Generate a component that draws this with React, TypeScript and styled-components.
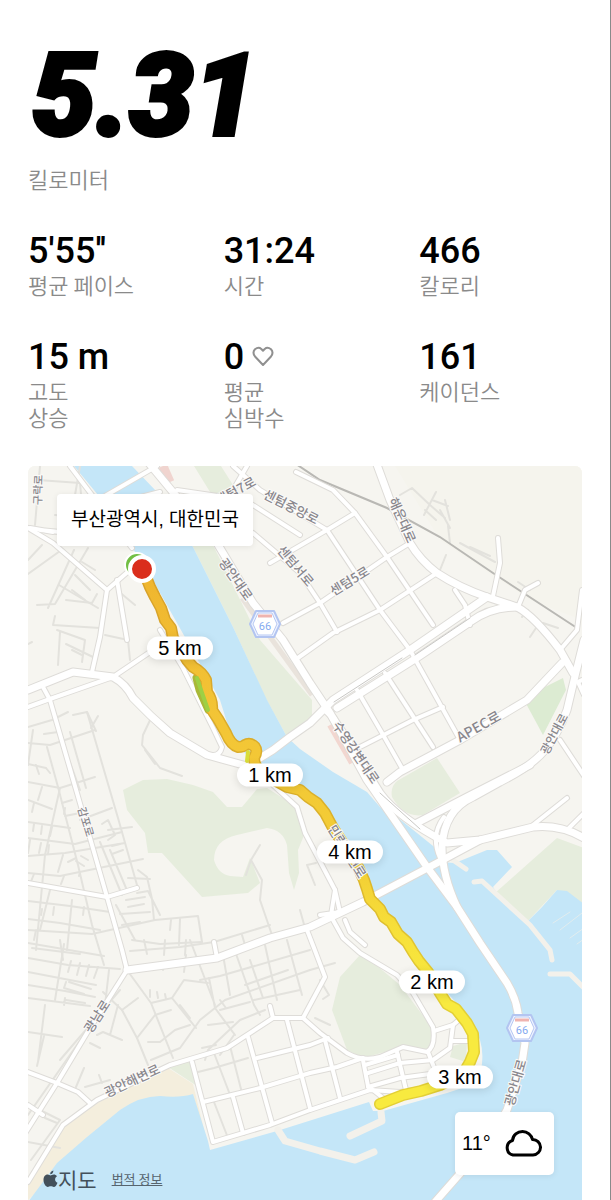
import React from "react";
import styled, { createGlobalStyle } from "styled-components";

const GlobalStyle = createGlobalStyle`
  * { box-sizing: border-box; }
  body { margin: 0; background: #fff; color: #000; font-family: "Liberation Sans", "Noto Sans CJK KR", sans-serif; }
`;

const Page = styled.main`
  padding: 44px 28px 0;
  border-right: 1px solid #8a8a8a;
`;

const Distance = styled.h1`
  margin: 0;
  padding-left: 4px;
  font-family: Roboto, "Liberation Sans", sans-serif;
  font-size: 114px;
  line-height: 104px;
  font-weight: 900;
  font-style: italic;
  -webkit-text-stroke: 4px #000;
`;

const Label = styled.span`
  display: block;
  font-family: "Noto Sans CJK KR", sans-serif;
  font-size: 22px;
  font-weight: 350;
  line-height: 26px;
  color: #8a8a8a;
  white-space: pre-line;
`;

const DistanceLabel = styled(Label)`
  margin-top: 17px;
`;

const Stats = styled.dl`
  display: grid;
  grid-template-columns: repeat(3, 1fr);
  column-gap: 33px;
  row-gap: 40px;
  margin: 40px 0 37px;
`;

const Stat = styled.div`
  display: flex;
  flex-direction: column-reverse;
  justify-content: flex-end;
`;

const Value = styled.dd`
  display: flex;
  align-items: center;
  gap: 8px;
  margin: 0;
  font-family: Roboto, "Liberation Sans", sans-serif;
  font-size: 36px;
  font-weight: 500;
  line-height: 40px;
  white-space: pre;
`;

const MapPanel = styled.section`
  position: relative;
  aspect-ratio: 554 / 734;
  overflow: hidden;
  border-radius: 7px 7px 0 0;
  background: #f6f5f0;
`;

const MapDrawing = styled.svg`
  display: block;
  width: 100%;
  height: 100%;
`;

const Place = styled.div`
  position: absolute;
  top: 28px;
  left: 29px;
  padding: 0 14px;
  border-radius: 4px;
  background: #fff;
  box-shadow: 0 1px 6px rgba(0, 0, 0, 0.08);
  font-size: 19px;
  line-height: 52px;
`;

const KmPill = styled.span<{ $x: number; $y: number }>`
  position: absolute;
  left: ${(p) => ((p.$x - 28) / 554) * 100}%;
  top: ${(p) => ((p.$y - 466) / 734) * 100}%;
  transform: translate(-50%, -50%);
  width: 66px;
  border-radius: 12px;
  background: #fff;
  box-shadow: 0 2px 8px rgba(0, 0, 0, 0.12);
  font-size: 20px;
  line-height: 23px;
  text-align: center;
`;

const Weather = styled.div`
  position: absolute;
  right: 28px;
  bottom: 25px;
  display: flex;
  align-items: center;
  justify-content: space-between;
  width: 99px;
  height: 63px;
  padding: 0 12px 0 7px;
  border-radius: 5px;
  background: #fff;
  box-shadow: 0 1px 6px rgba(0, 0, 0, 0.08);
  font-size: 20px;
`;

const Attribution = styled.footer`
  position: absolute;
  left: 15px;
  bottom: 7px;
  display: flex;
  align-items: center;
  color: #43505a;
  font-family: "Noto Sans CJK KR", sans-serif;
  font-size: 21px;
  line-height: 28px;
`;

const Legal = styled.a`
  margin-left: 15px;
  font-size: 13px;
  color: #56646e;
  text-decoration: underline;
`;

const RoadName = styled.text`
  font-family: "Noto Sans CJK KR", sans-serif;
  font-weight: 500;
  fill: #89878d;
  stroke: #fbfaf8;
  stroke-width: 2px;
  paint-order: stroke;
  text-anchor: middle;
`;

const stats = [
  { value: "5'55''", label: "평균 페이스" },
  { value: "31:24", label: "시간" },
  { value: "466", label: "칼로리" },
  { value: "15 m", label: "고도\n상승" },
  { value: "0", label: "평균\n심박수", heart: true },
  { value: "161", label: "케이던스" },
];

const markers = [
  { text: "5 km", x: 180, y: 648 },
  { text: "1 km", x: 270, y: 775 },
  { text: "4 km", x: 350, y: 852 },
  { text: "2 km", x: 432, y: 982 },
  { text: "3 km", x: 460, y: 1077 },
];

const names: [string, number, number, number, number][] = [
  ["센텀7로", 238, 495, -29, 13],
  ["센텀중앙로", 289, 511, 27, 13],
  ["센텀서로", 292, 569, 50, 13],
  ["센텀5로", 352, 585, -31, 13],
  ["해운대로", 398, 522, 66, 13],
  ["광안대로", 232, 582, 55, 13],
  ["수영강변대로", 352, 755, 56, 13],
  ["APEC로", 481, 731, -29, 14],
  ["광안대로", 558, 736, -62, 12],
  ["감포로", 82, 823, 73, 11],
  ["광남로", 101, 1019, -57, 13],
  ["광안해변로", 134, 1085, -25, 13],
  ["광안대로", 520, 1084, -74, 13],
  ["민락수변로", 343, 854, 58, 13],
  ["구락로", 42, 490, -88, 11],
];

const railway = "M296 464L320 480L387 508L440 537L493 573L577 628";

const avenues = [
  "M148 462L177 497L217 543L253 603L283 640L310 683L330 713L367 780L427 867L457 907L480 943L507 983Q516 998 518 1013L525 1043L522 1063L507 1110L490 1140L457 1177L435 1202",
  "M376 462L390 500L410 543Q420 560 437 573Q460 588 487 597L517 607Q534 616 560 650L573 673",
  "M28 690L73 672L113 677Q126 684 133 698Q150 716 170 733L207 755L247 766L273 750L290 737L310 723L333 700L410 650L487 597",
  "M337 708L415 659L470 622Q490 607 517 607",
  "M584 640L576 672L567 710Q558 734 545 750Q532 766 500 782L473 797Q444 810 442 847Q442 875 457 907",
  "M333 718L380 793Q397 817 447 843L480 840L533 827Q560 824 584 838",
  "M387 782L400 772L460 740L527 700L562 663",
  "M417 823L467 797L530 765",
  "M127 970L217 958L270 938L310 927L363 902L437 863L480 840",
];

const streets = [
  "M28 528L53 543L107 590L138 563", "M53 532L30 528M40 530L60 532",
  "M107 590L100 637L92 672", "M117 580L127 640", "M28 707L50 699L113 677L153 650",
  "M43 687L50 700L77 793L107 897L122 950L127 970L87 1033L57 1083L26 1132",
  "M28 883L107 897L137 888", "M132 548L70 466",
  "M212 755Q220 756 222 747L213 728L183 668L160 630",
  "M273 785L297 807L305 833L323 867L335 890L340 912",
  "M28 1182L63 1125L97 1100L170 1065L227 1048L273 1018L303 1018L320 1033L347 1053Q363 1062 380 1057L403 1047L427 1052Q436 1046 433 1027L413 993L397 975L360 953L343 938L333 920",
  "M28 1072L57 1083L78 1092L90 1103", "M28 1105L43 1115",
  "M303 1018L325 977L314 948L307 930",
  "M217 958L214 942", "M273 1018L270 1006",
  "M192 1062L213 1142L270 1125L310 1110L370 1090L400 1092L447 1085",
  "M203 1102L260 1088L310 1073L337 1067L363 1058",
  "M257 1058L310 1045L328 1038", "M248 1037L272 1123", "M287 1020L310 1108",
  "M233 1097L243 1133", "M325 1040L340 1098", "M363 1060L368 1086L383 1098",
  "M397 1052L406 1090", "M428 1052L437 1075", "M368 1073L400 1063L433 1060L450 1048L453 1025L434 1031",
  "M368 1087L400 1078L430 1074", "M453 1025L460 1019M453 1041L468 1041M365 1065L398 1055",
  "M335 890L331 915M320 915L340 912",
  "M160 492L98 508M98 500L157 466",
  "M498 538L500 563L493 596", "M518 607L525 590L538 583",
  "M296 472L333 490L355 513L387 557L433 625",
  "M233 466L260 490L327 530", "M177 490L245 500L300 535",
  "M270 563L327 530L355 513", "M327 530L380 610L410 650L460 740",
  "M283 623L320 603L387 557L410 543", "M295 660L333 633L380 610L437 573",
  "M253 533L300 573L320 603L337 632", "M247 466L233 490",
  "M357 690L382 733L403 770", "M385 673L433 747", "M360 747L413 720L443 707",
  "M470 625L465 605L455 590", "M533 825L567 798", "M567 830L584 813",
  "M560 740L584 776", "M582 590L577 630L560 650", "M584 695L578 682L582 680",
  "M326 712Q345 730 350 742M440 858Q430 835 444 817",
  "M345 920L350 932L365 945",
];

const lanes = [
  "M38 480L80 483L83 516M80 466L75 495M55 515L90 518M40 466L35 525",
  "M28 560L42 545M28 574L60 551M48 608L74 550M37 605L55 604L88 548M66 600L92 603L97 594",
  "M59 585L98 608M53 625L100 628M55 616L53 625M60 632L58 665M57 630L85 640L82 662M66 644L95 658M72 650L82 655M90 590L75 575",
  "M105 635L128 640L130 660M72 590L85 600M95 570L82 562M28 644L32 642M117 590L135 605",
  "M28 727L52 720L68 712M28 743L50 745L95 730M33 730L28 765M44 734L58 732M73 715L87 712L101 760L118 818L137 885",
  "M87 712L96 731M98 716L91 728M47 747L58 787L78 865L92 925L104 965M60 735L80 790M70 732L86 788",
  "M28 764L46 768M36 765L39 774M46 768L50 773M28 782L60 788L95 777M42 787L38 800M28 800L52 809M34 803L32 812",
  "M60 788L45 855L36 950M62 803L72 800M65 808L64 814M65 816L80 813M80 820L112 808M28 822L70 828",
  "M34 824L33 831M42 826L41 834M52 827L50 836M102 824L108 820L115 835L108 840M108 830L132 827",
  "M28 838L75 844L122 832M30 840L28 853M41 843L39 853M49 845L48 854M28 856L65 853L125 843M63 855L58 872",
  "M100 842L122 895M110 850L126 888M112 846L120 844M112 854L123 850M28 873L60 876L143 859",
  "M68 862L76 858M76 861L84 866M81 856L88 860M34 874L30 884M64 876L61 884M80 872L79 876",
  "M138 870L147 877L152 899L154 920M128 878L150 879M137 893L148 891L160 915M126 900L145 897M128 907L144 904",
  "M28 901L70 906L110 912M72 900L67 950M50 890L40 930M54 907L53 915M84 907L83 915M42 909L41 915",
  "M28 919L60 923L100 930M28 930L92 934L155 920L198 916L202 942M36 930L34 940M116 905L135 940M120 914L150 912",
  "M171 920L170 930M180 919L179 945M122 925L140 922M132 940L160 944L202 942M28 943L104 956M60 940L63 960",
  "M28 958L68 965L120 969M32 948L80 954M71 961L68 972M80 963L77 975M89 965L86 976M98 967L94 978",
  "M28 972L96 985M69 982L91 989M66 982L64 988L84 994M28 985L65 991L95 997M64 944L55 1000M109 970L105 1005L28 1115",
  "M28 998L90 1006M45 1005L38 1062M66 1000L85 1003M65 998L64 1005M28 1032L62 1037M44 1036L37 1066M120 990L60 1060",
  "M127 970L151 1003L173 1058M151 1003L172 998L184 980L208 983M103 992L122 1010L137 1038L148 1065M97 1035L103 1032L122 1040M118 1005L110 1035",
  "M122 1010L138 998M137 1038L155 1015L171 1010M148 1042L160 1042L175 1030L190 1025M172 998L196 1028M180 1005L190 1018",
  "M151 1060L180 1048L200 1020L225 1000L310 970M150 997L150 990M158 998L157 992M166 999L165 994",
  "M209 978L215 1008L235 1035M190 940L215 1005M220 1010L250 1002M226 1008L220 1000M144 940L147 954M165 940L164 955M186 940L185 955",
  "M130 951L180 947L214 942M141 965L139 972M152 964L150 970M165 962L163 970M186 955L184 972M200 980L220 976L310 950",
  "M223 955L230 995M235 951L254 1005L260 1015M250 960L263 998M265 945L277 1000M287 940L302 995M245 985L288 970M254 1000L300 990",
  "M205 1060L208 1050L240 1020L265 1010M220 1055L234 1035M208 1025L233 1022M202 1048L216 1045M214 1053L232 1100M230 1046L242 1093M198 1072L214 1068L248 1058",
  "M214 1102L228 1138M76 1087L84 1068M85 1087L110 1080M99 1075L102 1083M28 1142L60 1148M31 1160L60 1120L40 1110M45 1118L57 1123M100 1048L90 1043",
  "M152 716L143 735L142 745L160 768L182 776M145 750L155 764", "M260 845L251 860L262 880L260 900L272 935M251 860L246 875M214 942L270 925M242 935L245 945M300 910L305 928",
  "M400 495L412 488L430 505L445 518M424 515L436 492M432 500L448 506M440 510L450 528M445 500L450 520M448 526L450 543M436 520L425 510M446 555L440 570",
  "M470 547L490 556M460 543L495 562M538 625L530 637M543 623L558 628M518 582L530 590M528 610L522 617",
  "M307 865L316 863M307 865L315 885M310 970L335 963M320 980L329 995L323 999M315 1018L330 1025",
];

const route =
  "M144 572L150 587L155 597L161 608L165 620L171 628L173 638L180 648L187 660L193 667Q202 672 206 680L207 692Q213 700 212 710L218 719L226 733Q231 745 238 747Q243 747 245 745Q250 742 255 747Q258 751 254 758Q254 768 264 774L287 787L300 790L308 797L317 803L325 813L333 828L347 850L357 865L364 880L367 889L370 899L380 909L384 917L391 922L398 934L407 942L413 952L419 961L428 972L440 993L447 1004L456 1009L467 1023L473 1034L474 1052L470 1062L463 1074L440 1085L421 1091L403 1095L380 1104";

function HighwayShield({ x, y }: { x: number; y: number }) {
  return (
    <g transform={`translate(${x} ${y})`}>
      <path d="M-9 -13H9L15 0L9 13H-9L-15 0Z" fill="#eef3ff" stroke="#b3c5f1" strokeWidth="2" strokeLinejoin="round" />
      <path d="M-7 -11H7L12 0L7 11H-7L-12 0Z" fill="#fff" stroke="#b7c8f3" />
      <path d="M-7 -8H7" stroke="#efb4b0" strokeWidth="3" />
      <text y="6" fontSize="11" fontFamily="Roboto, sans-serif" fill="#85aaf0" textAnchor="middle">66</text>
    </g>
  );
}

function CityMap() {
  return (
    <MapDrawing viewBox="28 466 554 734" preserveAspectRatio="xMidYMin slice" role="img" aria-label="러닝 경로">
      <defs>
        <linearGradient id="pace" gradientUnits="userSpaceOnUse" x1="0" y1="570" x2="0" y2="1000">
          <stop offset="0" stopColor="#efb52e" />
          <stop offset="0.35" stopColor="#f3c536" />
          <stop offset="0.7" stopColor="#f3cf35" />
          <stop offset="0.85" stopColor="#f7e13a" />
          <stop offset="1" stopColor="#f8ea3f" />
        </linearGradient>
        <linearGradient id="edge" gradientUnits="userSpaceOnUse" x1="0" y1="570" x2="0" y2="1000">
          <stop offset="0" stopColor="#d8a12a" />
          <stop offset="0.7" stopColor="#dcb52b" />
          <stop offset="1" stopColor="#e3cf35" />
        </linearGradient>
      </defs>
      <path d="M28 466H582V1200H28Z" fill="#f6f5f0" />
      <path d="M395 466H582V620L530 600L440 540Z" fill="#f5f4ed" />

      <g fill="#e6eddd">
        <path d="M186 500L213 545L260 640L312 700V717L287 737L265 697L233 627L193 547ZM194 466H221L238 493L215 500Z" />
        <path d="M123 790L143 780L167 779L193 785L213 792L227 807L242 807L257 789L267 788L297 807L305 833L298 850L299 873L294 890L289 873L287 845Q283 830 267 828L237 835Q214 840 214 860Q218 874 230 876L243 877L250 858L260 883L248 893L202 897L162 853L148 853L145 833L127 810Z" />
        <path d="M360 955L370 960L400 985L430 1025Q440 1040 427 1053L403 1047L363 1058L347 1050L332 1010L340 977Z" />
        <path d="M437 758L460 793L423 815Q404 818 392 797Q390 787 397 781Z" />
        <path d="M557 838L584 848V907L557 890L527 922L495 893Z" />
        <path d="M453 1046L467 1042L466 1062L450 1057ZM168 1067L190 1061L197 1086Z" />
      </g>
      <path d="M523 698L563 678L566 690L543 735Z" fill="#dcebd2" />
      <path d="M28 1200V1185L63 1128L97 1103L168 1068L193 1084L209 1150L193 1095L120 1115Z" fill="#f4eedd" />

      <g fill="#c4e6f8">
        <path d="M74 466H132L157 492L193 547L233 627L267 700L287 737L300 749L333 772L367 792L380 807L397 817L417 833L438 850L440 862L455 863L487 850L497 850L512 867L493 887L500 897L527 922L542 907L557 890L567 891L584 904V1202H28L57 1163L87 1137L120 1110Q140 1096 160 1096Q180 1098 193 1094L208 1141L210 1150L277 1131L369 1102L373 1111L383 1111L447 1093L477 1083Q486 1060 480 1040L470 1018L440 985L413 945L370 895L340 838L310 793L258 765L233 742L220 700L195 655L150 575L98 495Z" />
      </g>
      <g fill="none" stroke="#f3f1eb" strokeWidth="5" strokeLinecap="round" strokeLinejoin="round">
        <path d="M474 882L482 881L530 925L550 950L552 960M450 858L466 869M550 974L570 974L584 988" />
        <path strokeWidth="7" d="M381 1112L382 1121L350 1136M278 1130L285 1141L320 1151L355 1160L374 1152" />
        <path d="M553 923L570 912M560 930L582 913M570 938L584 928M577 944L584 939" stroke="#e2edef" strokeWidth="1" />
      </g>
      <path d="M163 466L170 482" stroke="#f0d4cf" strokeWidth="9" />
      <path d="M330 725L352 763" stroke="#f2d7d0" strokeWidth="6" />
      <path d="M242 598L312 695" stroke="#e9e3dc" strokeWidth="5" />

      <g fill="none" stroke="#e3e2dd" strokeWidth="2" strokeLinecap="round" strokeLinejoin="round">
        {lanes.map((d) => <path key={d} d={d} />)}
      </g>
      <path d={railway} fill="none" stroke="#b9b8b4" strokeWidth="2" />
      <g fill="none" strokeLinejoin="round" strokeLinecap="round">
        <g stroke="#dedcd8">
          {streets.map((d) => <path key={d} d={d} strokeWidth="6" />)}
          {avenues.map((d) => <path key={d} d={d} strokeWidth="9" />)}
        </g>
        <g stroke="#fff">
          {streets.map((d) => <path key={d} d={d} strokeWidth="4" />)}
          {avenues.map((d) => <path key={d} d={d} strokeWidth="7" />)}
        </g>
        <path d="M334 702L402 658M415 655L470 618M380 793L420 829" stroke="#c9c8c5" strokeWidth="1" />
      </g>

      <HighwayShield x={265} y={624} />
      <HighwayShield x={522} y={1028} />

      <g fill="none" strokeLinejoin="round" strokeLinecap="round">
        <path d="M196 678L199 690L208 710" stroke="#a9b838" strokeWidth="7" />
        <path d={route} stroke="url(#edge)" strokeWidth="12" />
        <path d={route} stroke="url(#pace)" strokeWidth="9" />
        <path d="M197 678L201 690L208 710" stroke="#9ed044" strokeWidth="4" />
        <path d="M248 752L247 761" stroke="#d9dd39" strokeWidth="4" />
      </g>
      {names.map(([text, x, y, angle, size]) => (
        <RoadName key={`${text}${x}`} fontSize={size} transform={`translate(${x} ${y}) rotate(${angle})`}>{text}</RoadName>
      ))}
      <circle cx="137" cy="565" r="12" fill="#72bf44" stroke="#fff" strokeWidth="2" />
      <circle cx="142" cy="569" r="12" fill="#da2e1c" stroke="#fff" strokeWidth="4" />
    </MapDrawing>
  );
}

export default function App() {
  return (
    <>
      <GlobalStyle />
      <Page>
        <Distance>5.31</Distance>
        <DistanceLabel>킬로미터</DistanceLabel>
        <Stats>
          {stats.map((s) => (
            <Stat key={s.value}>
              <Label as="dt">{s.label}</Label>
              <Value>
                {s.value}
                {s.heart && (
                  <svg width="22" height="22" viewBox="0 0 22 22" fill="none" stroke="#909090" strokeWidth="2" aria-hidden="true">
                    <path d="M11 19L3 10.500Q0 6.500 3 3.300Q6.500 0.500 9.300 3L11 4.700L12.700 3Q15.500 0.500 19 3.300Q22 6.500 19 10.500Z" strokeLinejoin="round" />
                  </svg>
                )}
              </Value>
            </Stat>
          ))}
        </Stats>
        <MapPanel>
          <CityMap />
          {markers.map((m) => <KmPill key={m.text} $x={m.x} $y={m.y}>{m.text}</KmPill>)}
          <Place>부산광역시, 대한민국</Place>
          <Weather>
            <span>11°</span>
            <svg width="38" height="27" viewBox="0 0 38 27" fill="none" stroke="#000" strokeWidth="3" aria-label="흐림">
              <path d="M9 25A7.500 7.500 0 0 1 8.500 10.500C9 5 13.500 1.500 18.500 1.500S27.500 5 28.500 9.500A7.700 7.700 0 0 1 29 25Z" strokeLinejoin="round" />
            </svg>
          </Weather>
          <Attribution>
            <svg width="15" height="18" viewBox="0 0 15 18" fill="currentColor" aria-hidden="true">
              <path d="M10.400 0.500C10.500 2.700 8.900 4.200 7.200 4.200C7.100 2.300 8.700 0.700 10.400 0.500ZM7.500 5.400C8.200 5.400 9.200 4.500 10.800 4.500C12 4.500 13.200 5.100 14 6.200C11.200 7.900 11.700 11.700 14.500 12.700C13.800 14.700 12.400 17 10.800 17C9.700 17 9.200 16.300 7.800 16.300C6.400 16.300 5.800 17 4.800 17C2.800 17 0.500 13.300 0.500 10C0.500 6.400 2.700 4.600 4.700 4.600C6 4.600 6.900 5.400 7.500 5.400Z" />
            </svg>
            지도
            <Legal href="#legal">법적 정보</Legal>
          </Attribution>
        </MapPanel>
      </Page>
    </>
  );
}
